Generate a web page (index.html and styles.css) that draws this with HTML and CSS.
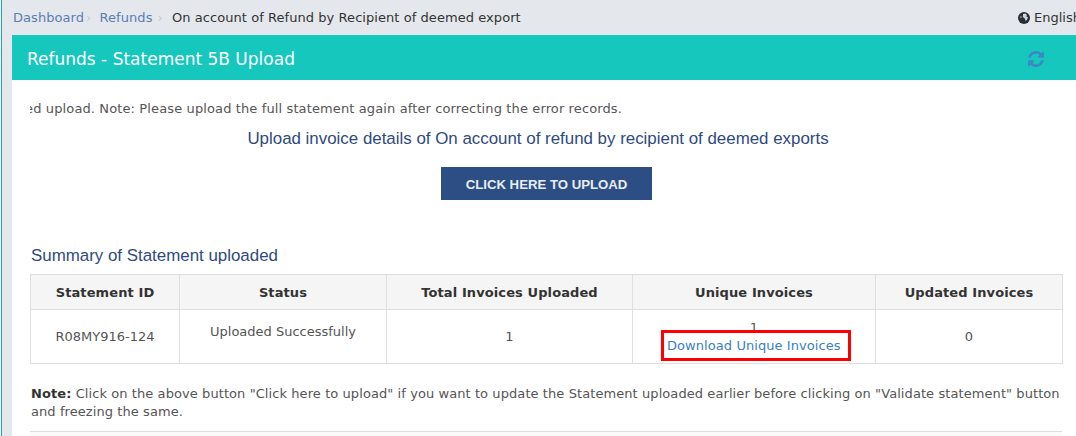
FILE: index.html
```html
<!DOCTYPE html>
<html>

<head>
    <meta charset="utf-8" />
    <title>Refunds - Statement 5B Upload</title>
    <link rel="stylesheet" href="styles.css">
</head>

<body>
    <div class="page">
        <div class="topbar">
            <div class="crumbs">
                <a href="#">Dashboard</a><span class="sep">&rsaquo;</span>
                <a href="#">Refunds</a><span class="sep sep-last">&rsaquo;</span>
                <span class="current">On account of Refund by Recipient of deemed export</span>
            </div>
            <div class="lang">
                <svg class="globe" viewBox="0 0 12 12">
                    <circle cx="6" cy="6" r="6" fill="#2a2d33" />
                    <path d="M5 2l2.500-.4 1.500 1.400-.8 1.200 1.800 1.200-1 2.400-1.300 1.200-.9-2.600-2-1.400z" fill="#c9d6e4" />
                    <path d="M2 4.500l1.200-.5.6 1.600-1.200.8z" fill="#8fa6bf" />
                </svg>
                <span>English</span>
            </div>
        </div>
        <div class="panel">
            <div class="panel-head">
                <h1>Refunds - Statement 5B Upload</h1>
                <svg class="refresh" viewBox="0 0 1536 1536">
                    <path d="M1511 928q0 5-1 7-64 268-268 434.500t-478 166.500q-146 0-282.500-55t-243.500-157l-129 129q-19 19-45 19t-45-19-19-45v-448q0-26 19-45t45-19h448q26 0 45 19t19 45-19 45l-137 137q71 66 161 102t187 36q134 0 250-65t186-179q11-17 53-117 8-23 30-23h192q13 0 22.500 9.500t9.500 22.500zm25-800v448q0 26-19 45t-45 19h-448q-26 0-45-19t-19-45 19-45l138-138q-148-137-349-137-134 0-250 65t-186 179q-11 17-53 117-8 23-30 23h-199q-13 0-22.500-9.500t-9.500-22.500v-7q65-268 270-434.500t480-166.500q146 0 284 55.500t245 156.500l130-129q19-19 45-19t45 19 19 45z" />
                </svg>
            </div>
            <div class="panel-body">
                <div class="clip-line"><span>failed upload. Note: Please upload the full statement again after correcting the error records.</span></div>
                <h2 class="upload-title">Upload invoice details of On account of refund by recipient of deemed exports</h2>
                <div class="upload-row"><button class="btn-upload">CLICK HERE TO UPLOAD</button></div>
                <h3 class="summary-title">Summary of Statement uploaded</h3>
                <table class="summary">
                    <colgroup>
                        <col class="c1">
                        <col class="c2">
                        <col class="c3">
                        <col class="c4">
                        <col class="c5">
                    </colgroup>
                    <tr>
                        <th>Statement ID</th>
                        <th>Status</th>
                        <th>Total Invoices Uploaded</th>
                        <th>Unique Invoices</th>
                        <th>Updated Invoices</th>
                    </tr>
                    <tr>
                        <td>R08MY916-124</td>
                        <td class="top">Uploaded Successfully</td>
                        <td>1</td>
                        <td class="unique">
                            <div class="unique-num">1</div>
                            <a href="#" class="marked">Download Unique Invoices</a>
                        </td>
                        <td>0</td>
                    </tr>
                </table>
                <p class="note"><b>Note:</b> Click on the above button "Click here to upload" if you want to update the Statement uploaded earlier before clicking on "Validate statement" button and freezing the same.</p>
                <div class="rule"></div>
            </div>
        </div>
    </div>
</body>

</html>
```

FILE: styles.css
```css
* {
    margin: 0;
    padding: 0;
    box-sizing: border-box;
}

html,
body {
    height: 100%;
    overflow: hidden;
    background: #fff;
}

body {
    font-family: "DejaVu Sans", sans-serif;
    font-size: 13px;
    color: #555;
    padding-left: 1px;
}

a {
    color: #3a7fc4;
    text-decoration: none;
}

.page {
    height: 100%;
    padding-left: 10px;
    background: #e4e8ec;
    border-left: 1px solid #17a9b5;
}

.topbar {
    height: 35px;
    display: flex;
    justify-content: space-between;
    align-items: center;
}

.crumbs {
    white-space: nowrap;
    letter-spacing: 0.06px;
    padding-left: 1px;
}

.crumbs a {
    color: #5b7db5;
}

.sep {
    color: #c4c9ce;
    margin: 0 4px 0 2px;
}

.sep-last {
    margin: 0 5px;
}

.current {
    color: #333;
}

.lang {
    width: 58px;
    display: flex;
    align-items: center;
    gap: 4px;
    white-space: nowrap;
    color: #333;
    flex-shrink: 0;
}

.globe {
    width: 12px;
    height: 12px;
    flex-shrink: 0;
}

.panel {
    background: #fff;
}

.panel-head {
    height: 45px;
    background: #15c7bc;
    display: flex;
    justify-content: space-between;
    align-items: center;
    padding: 3px 32px 0 15px;
}

.panel-head h1 {
    font-size: 17px;
    font-weight: normal;
    color: #fff;
}

.refresh {
    width: 16px;
    height: 16px;
    fill: #3f86c4;
}

.panel-body {
    padding: 21px 14px 0 18px;
}

.clip-line {
    width: 592px;
    padding-left: 1px;
    display: flex;
    justify-content: flex-end;
    overflow: hidden;
    white-space: nowrap;
    line-height: 16px;
    letter-spacing: 0.12px;
}

.clip-line span {
    flex-shrink: 0;
}

.upload-title {
    margin-top: 12px;
    padding-right: 16px;
    text-align: center;
    font-family: "Liberation Sans", sans-serif;
    font-size: 16.900px;
    font-weight: normal;
    line-height: 20px;
    color: #2f4a80;
}

.upload-row {
    margin-top: 18px;
    padding-left: 411px;
}

.btn-upload {
    width: 211px;
    height: 33px;
    border: 0;
    padding-top: 2px;
    background: #2c4e85;
    color: #e8edf4;
    font-family: "Liberation Sans", sans-serif;
    font-size: 13.200px;
    font-weight: bold;
}

.summary-title {
    margin-top: 46px;
    padding-left: 1px;
    font-family: "Liberation Sans", sans-serif;
    font-size: 16.900px;
    font-weight: normal;
    line-height: 20px;
    color: #2f4a80;
}

.summary {
    margin-top: 8px;
    width: 1032px;
    table-layout: fixed;
    border-collapse: collapse;
}

.c1 { width: 149px; }
.c2 { width: 207px; }
.c3 { width: 246px; }
.c4 { width: 243px; }
.c5 { width: 187px; }

.summary th,
.summary td {
    border: 1px solid #dcdfe2;
    text-align: center;
}

.summary th {
    height: 35px;
    background: #f5f5f5;
    font-weight: bold;
    color: #333;
    letter-spacing: 0.1px;
}

.summary td {
    height: 54px;
}

.summary td.top {
    vertical-align: top;
    padding-top: 14px;
}

.summary td.unique {
    vertical-align: top;
    padding-top: 12px;
    line-height: 11px;
}

.unique-num {
    height: 8px;
}

.marked {
    display: inline-block;
    width: 190px;
    height: 31px;
    margin-left: 4px;
    padding-left: 3px;
    border: 3px solid #f00;
    line-height: 25px;
    text-align: left;
    letter-spacing: 0.07px;
    background: #fff;
    white-space: nowrap;
}

.note {
    margin-top: 21px;
    padding-left: 1px;
    line-height: 18px;
    letter-spacing: 0.08px;
}

.note b {
    color: #333;
}

.rule {
    margin-top: 10px;
    width: 1032px;
    height: 20px;
    background: #fbfbfb;
    border-top: 1px solid #dcdfe2;
}
```
